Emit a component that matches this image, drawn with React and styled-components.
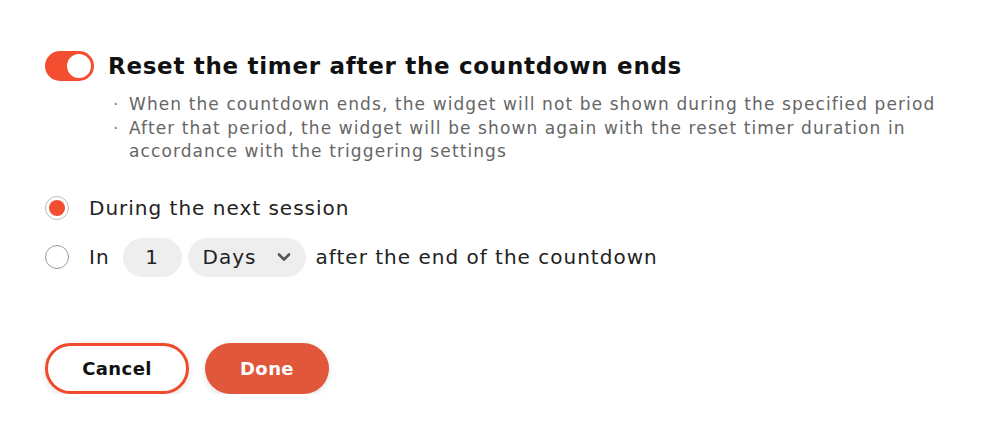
import React, { useState } from 'react';
import styled, { createGlobalStyle } from 'styled-components';

const GlobalStyle = createGlobalStyle`
  body {
    margin: 0;
    background: #ffffff;
    font-family: "DejaVu Sans", "Noto Sans", sans-serif;
  }
`;

const Page = styled.div`
  padding: 50px 45px 0;
  color: #111111;
`;

const Header = styled.div`
  display: flex;
  align-items: center;
  gap: 14px;
  height: 32px;
`;

const Toggle = styled.button`
  width: 49px;
  height: 30px;
  border: none;
  border-radius: 15px;
  padding: 3px;
  display: flex;
  justify-content: ${(p) => (p.$on ? 'flex-end' : 'flex-start')};
  background: ${(p) => (p.$on ? '#f44e30' : '#cccccc')};
  cursor: pointer;

  span {
    width: 24px;
    height: 24px;
    border-radius: 50%;
    background: #ffffff;
  }
`;

const Title = styled.h2`
  margin: 0;
  font-size: 23px;
  font-weight: 700;
  color: #111111;
  letter-spacing: 0.7px;
`;

const Notes = styled.ul`
  margin: 11px 0 0;
  padding: 0 0 0 84px;
  list-style: none;
  max-width: 820px;
`;

const Note = styled.li`
  position: relative;
  font-size: 17px;
  line-height: 23.5px;
  letter-spacing: 1.1px;
  color: #666666;

  &::before {
    content: '·';
    position: absolute;
    left: -16px;
    color: #888888;
  }
`;

const Options = styled.div`
  margin-top: 25px;
  display: flex;
  flex-direction: column;
  gap: 10px;
`;

const Option = styled.label`
  display: flex;
  align-items: center;
  height: 39px;
  font-size: 20px;
  letter-spacing: 1px;
  color: #222222;
  cursor: pointer;
`;

const Radio = styled.span`
  width: 22px;
  height: 22px;
  border-radius: 50%;
  border: 1.5px solid ${(p) => (p.$checked ? '#bbbbbb' : '#999999')};
  display: flex;
  align-items: center;
  justify-content: center;
  margin-right: 20px;
  flex-shrink: 0;

  &::after {
    content: '';
    width: 16px;
    height: 16px;
    border-radius: 50%;
    background: ${(p) => (p.$checked ? '#f44e30' : 'transparent')};
  }
`;

const Pill = styled.div`
  height: 39px;
  border-radius: 20px;
  background: #eeeeee;
  display: flex;
  align-items: center;
  justify-content: ${(p) => (p.$center ? 'center' : 'space-between')};
  width: ${(p) => p.$w}px;
  margin: 0 ${(p) => p.$mr}px 0 ${(p) => p.$ml}px;
  padding: 0 ${(p) => (p.$center ? 0 : 14)}px 0 ${(p) => (p.$center ? 0 : 15)}px;
  box-sizing: border-box;
  font-size: 20px;
  color: #222222;

  svg {
    color: #555555;
  }
`;

const Actions = styled.div`
  margin-top: 66px;
  display: flex;
  gap: 16px;
`;

const Button = styled.button`
  height: 51px;
  border-radius: 26px;
  font-family: inherit;
  font-size: 18px;
  font-weight: 700;
  letter-spacing: 0.4px;
  box-sizing: border-box;
  cursor: pointer;
  box-shadow: 0 2px 6px rgba(0, 0, 0, 0.12);
  width: ${(p) => p.$w}px;
  border: ${(p) => (p.$primary ? 'none' : '3px solid #f04a2c')};
  background: ${(p) => (p.$primary ? '#e0573b' : '#ffffff')};
  color: ${(p) => (p.$primary ? '#ffffff' : '#111111')};
`;

const Chevron = () => (
  <svg width="16" height="16" viewBox="0 0 16 16" fill="none">
    <path d="M3 5.5l5 5 5-5" stroke="currentColor" strokeWidth="2.6" strokeLinecap="round" strokeLinejoin="round" />
  </svg>
);

export default function App() {
  const [on, setOn] = useState(true);
  const [choice, setChoice] = useState('session');

  return (
    <Page>
      <GlobalStyle />
      <Header>
        <Toggle $on={on} onClick={() => setOn(!on)}>
          <span />
        </Toggle>
        <Title>Reset the timer after the countdown ends</Title>
      </Header>

      <Notes>
        <Note>When the countdown ends, the widget will not be shown during the specified period</Note>
        <Note>After that period, the widget will be shown again with the reset timer duration in accordance with the triggering settings</Note>
      </Notes>

      <Options>
        <Option onClick={() => setChoice('session')}>
          <Radio $checked={choice === 'session'} />
          During the next session
        </Option>
        <Option onClick={() => setChoice('days')}>
          <Radio $checked={choice === 'days'} />
          In
          <Pill $center $w={59} $ml={13} $mr={6}>1</Pill>
          <Pill $w={118} $ml={0} $mr={10}>
            Days
            <Chevron />
          </Pill>
          after the end of the countdown
        </Option>
      </Options>

      <Actions>
        <Button $w={144}>Cancel</Button>
        <Button $primary $w={124}>Done</Button>
      </Actions>
    </Page>
  );
}
